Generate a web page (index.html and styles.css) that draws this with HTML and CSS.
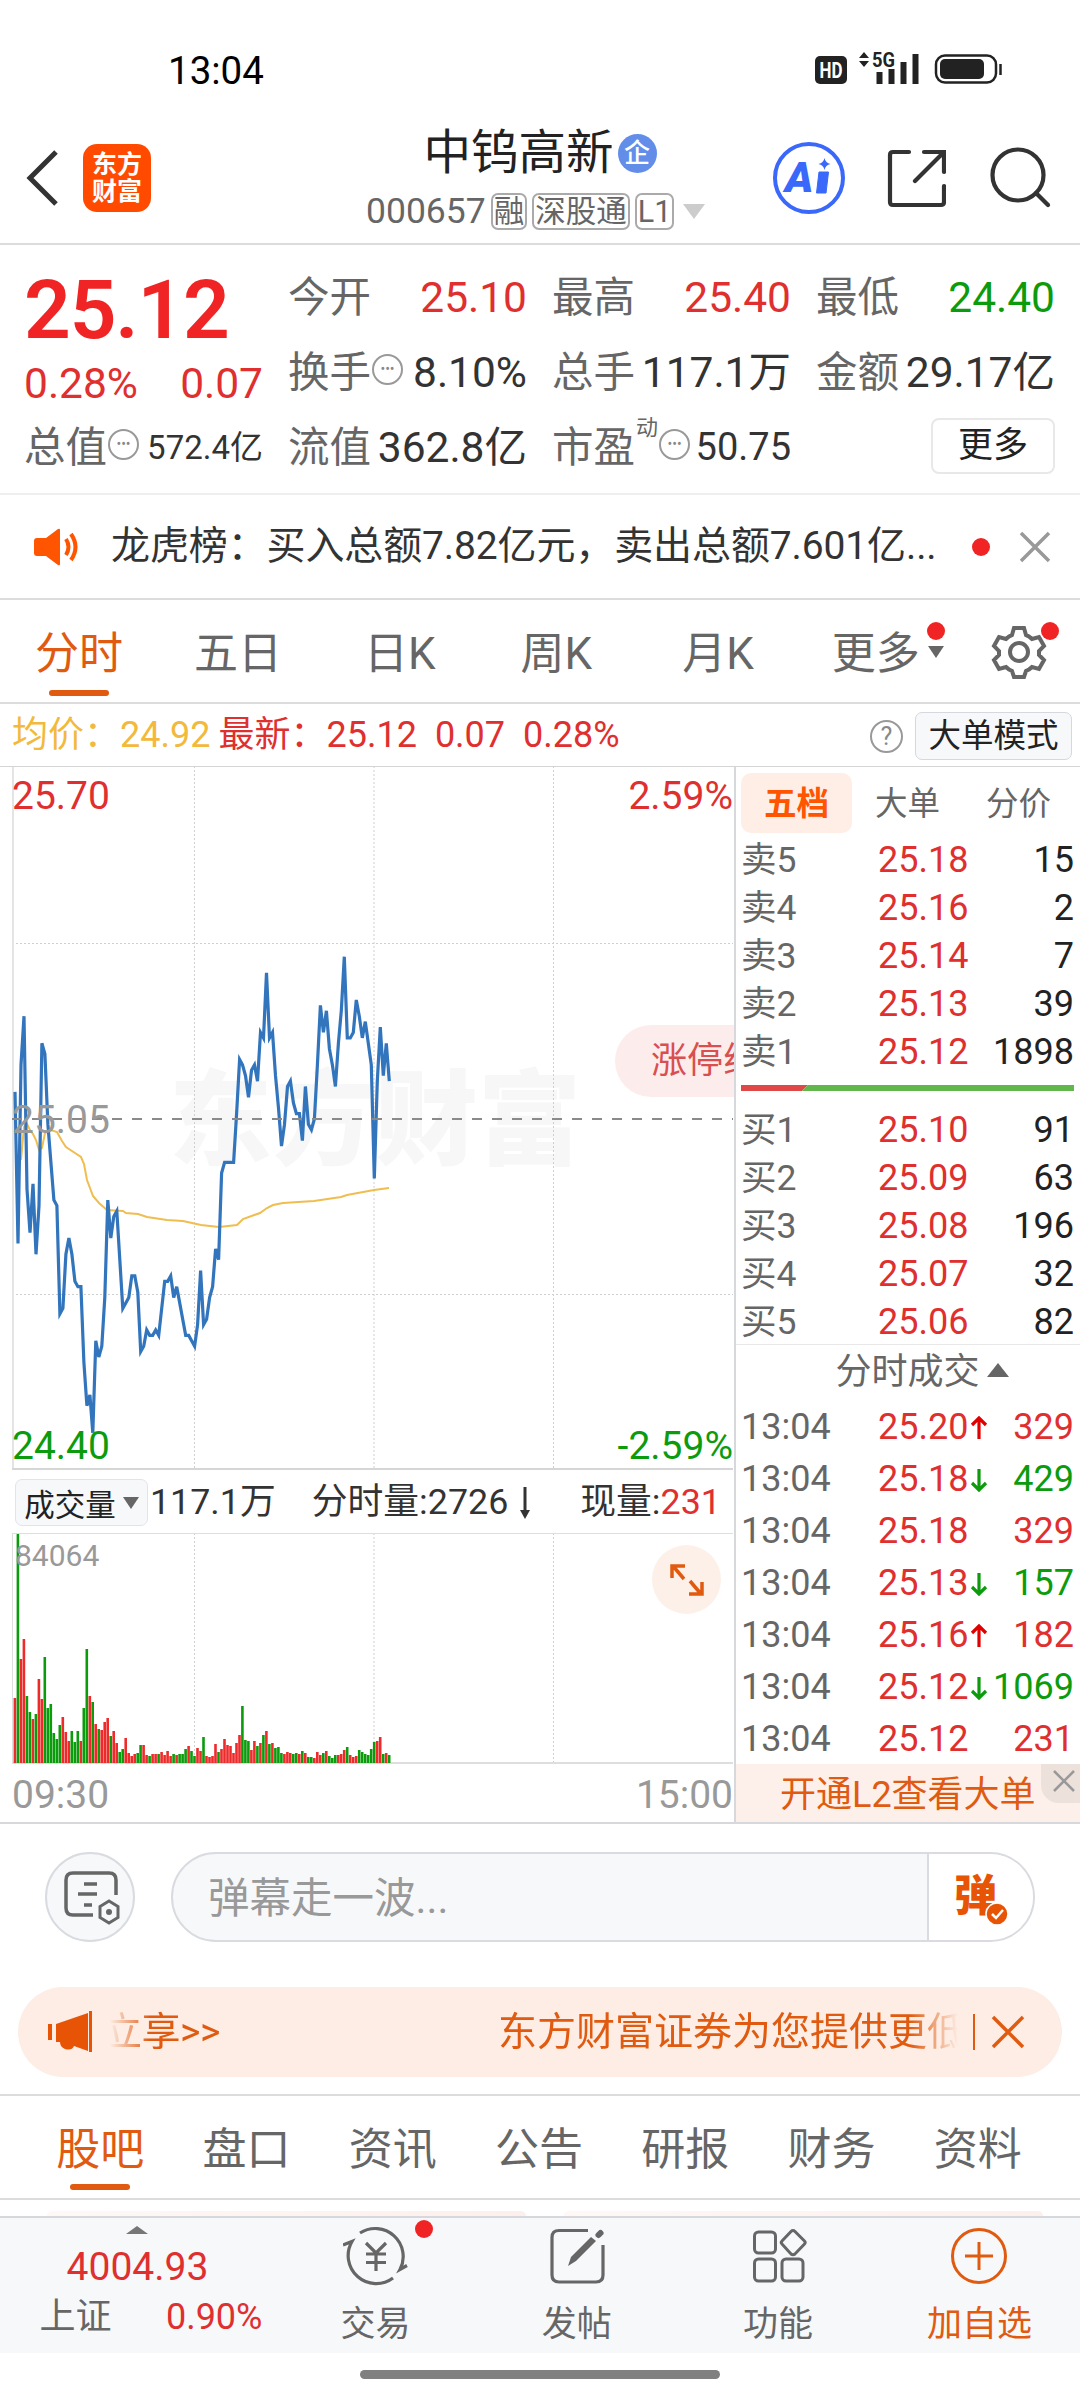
FILE: index.html
```html
<!DOCTYPE html>
<html lang="zh-CN">
<head>
  <meta charset="UTF-8">
  <meta name="viewport" content="width=device-width, initial-scale=1.0">
  <title>中钨高新 000657</title>
  <link rel="stylesheet" href="styles.css">
</head>
<body>
  <div class="status-bar">
    <span class="clock">13:04</span>
    <svg width="190" height="36" viewBox="0 0 190 36">
      <rect x="1" y="5" width="32" height="28" rx="5" fill="#222"/>
      <text x="17" y="27" class="hd" text-anchor="middle" textLength="23" lengthAdjust="spacingAndGlyphs">HD</text>
      <path d="M50 1l5 6H45zM50 16l5-6H45z" fill="#222"/>
      <text x="58" y="16" class="net" textLength="23" lengthAdjust="spacingAndGlyphs">5G</text>
      <path d="M65.500 21v12M77.500 18v15M89.500 11v22M101.500 3v30" stroke="#222" stroke-width="6"/>
      <rect x="122" y="4.500" width="60" height="27" rx="9" fill="none" stroke="#222" stroke-width="2.500"/>
      <rect x="126" y="8" width="44" height="20" rx="5" fill="#222"/>
      <path d="M186.500 13v11" stroke="#222" stroke-width="2.500"/>
    </svg>
  </div>

  <header class="header">
    <svg class="back" width="34" height="58" viewBox="0 0 34 58"><path d="M30 3L4 29l26 26" fill="none" stroke="#333" stroke-width="5"/></svg>
    <div class="logo">东方<br>财富</div>
    <div class="stock">
      <div class="stock-name">中钨高新<span class="corp">企</span></div>
      <div class="stock-code">000657<span class="tag">融</span><span class="tag">深股通</span><span class="tag">L1</span><i class="tri-down big"></i></div>
    </div>
    <svg class="ai" width="74" height="74" viewBox="0 0 74 74">
      <circle cx="37" cy="37" r="34" fill="none" stroke="#3a68fa" stroke-width="4"/>
      <text x="13" y="51" class="ai-text">A</text>
      <path d="M47 31h9.500l-2.500 21h-9.500z" fill="#3a68fa" stroke="#3a68fa" stroke-linejoin="round"/>
      <path d="M52.500 17q1 5 6 6-5 1-6 6-1-5-6-6 5-1 6-6z" fill="#3a68fa"/>
    </svg>
    <svg class="share" width="60" height="60" viewBox="0 0 60 60">
      <path d="M23 4H7q-3 0-3 3v47q0 3 3 3h48q3 0 3-3V38M38 4h20v20M57 5L29 33" fill="none" stroke="#333" stroke-width="4.200" stroke-linecap="round"/>
    </svg>
    <svg class="search" width="64" height="64" viewBox="0 0 64 64">
      <circle cx="29" cy="29" r="25.500" fill="none" stroke="#333" stroke-width="4.200"/>
      <path d="M47 47l12 12" stroke="#333" stroke-width="4.200" stroke-linecap="round"/>
    </svg>
  </header>

  <section class="quote">
    <div class="now">
      <div class="price">25.12</div>
      <div class="change"><span>0.28%</span><span>0.07</span></div>
      <div class="cell"><label>总值</label><i class="dots">•••</i><b class="small">572.4亿</b></div>
    </div>
    <div class="stats">
      <div class="cell"><label>今开</label><b class="red">25.10</b></div>
      <div class="cell"><label>最高</label><b class="red">25.40</b></div>
      <div class="cell"><label>最低</label><b class="green">24.40</b></div>
      <div class="cell"><label>换手</label><i class="dots">•••</i><b>8.10%</b></div>
      <div class="cell"><label>总手</label><b>117.1万</b></div>
      <div class="cell"><label>金额</label><b>29.17亿</b></div>
      <div class="cell"><label>流值</label><b>362.8亿</b></div>
      <div class="cell"><label>市盈</label><sup>动</sup><i class="dots">•••</i><b class="pe">50.75</b></div>
      <div class="cell"><button class="more-btn">更多</button></div>
    </div>
  </section>

  <div class="notice">
    <svg width="48" height="40" viewBox="0 0 48 40">
      <path d="M4 11h9L25 2q2-1 2 1v34q0 2-2 1L13 29H4q-3 0-3-3V14q0-3 3-3z" fill="#ff5500"/>
      <path d="M33 12q5 8 0 16M38 7q9 13 0 26" fill="none" stroke="#ff5500" stroke-width="4"/>
    </svg>
    <p>龙虎榜：买入总额7.82亿元，卖出总额7.601亿...</p>
    <i class="dot"></i>
    <svg class="close" width="32" height="32" viewBox="0 0 32 32"><path d="M2 2l28 28M30 2L2 30" stroke="#999" stroke-width="3.500"/></svg>
  </div>

  <nav class="periods">
    <a class="active">分时</a>
    <a>五日</a>
    <a>日K</a>
    <a>周K</a>
    <a>月K</a>
    <a class="more">更多<span class="more-mark"><i class="dot"></i><i class="tri-down"></i></span></a>
    <span class="gear">
      <svg width="56" height="56" viewBox="0 0 56 56" fill="none" stroke="#666" stroke-width="4">
        <path d="M23 4h10l2 7q3 1 6 4l7-2 5 9-5 5v4l5 5-5 9-7-2q-3 3-6 4l-2 6H23l-2-6q-3-1-6-4l-7 2-5-9 5-5v-4l-5-5 5-9 7 2q3-3 6-4z"/>
        <circle cx="28" cy="28" r="9"/>
      </svg>
      <i class="dot"></i>
    </span>
  </nav>

  <div class="legend">
    <span class="avg">均价：24.92</span>
    <span class="last">最新：25.12</span>
    <span class="last">0.07</span>
    <span class="last">0.28%</span>
    <i class="help">?</i>
    <button class="mode-btn">大单模式</button>
  </div>

  <main class="board">
    <div class="charts">
      <div class="trend">
        <svg width="734" height="703" viewBox="0 1 734 703">
          <text x="169" y="391" class="watermark">东方财富</text>
          <g stroke="#cfcfcf" stroke-dasharray="2 2">
            <path d="M12 177.500h721M12 528.500h721M194.500 0v703M374 0v703M553.500 0v703"/>
          </g>
          <path d="M13 0v703" stroke="#e4e4e4" stroke-width="2"/>
          <path d="M12 703h721" stroke="#d6d6d6" stroke-width="2"/>
          <polyline id="avg-line" fill="none" stroke="#f0bd4f" stroke-width="2"/>
          <polyline id="price-line" fill="none" stroke="#3275bd" stroke-width="3.200"/>
          <path d="M12 353h721" stroke="#8a8a8a" stroke-width="2" stroke-dasharray="10 10"/>
        </svg>
        <span class="axis top-left red">25.70</span>
        <span class="axis top-right red">2.59%</span>
        <span class="axis mid-left">25.05</span>
        <span class="axis bottom-left green">24.40</span>
        <span class="axis bottom-right green">-2.59%</span>
        <span class="limit">涨停线</span>
      </div>
      <div class="vol-head">
        <button class="vol-btn">成交量<i class="tri-down"></i></button>
        <span class="vol-total">117.1万</span>
        <span class="vol-min">分时量:2726</span>
        <svg width="16" height="34" viewBox="0 0 16 34"><path d="M8 1v26" stroke="#333" stroke-width="3"/><path d="M3 24h10l-5 9z" fill="#333"/></svg>
        <span class="vol-now">现量:<em>231</em></span>
      </div>
      <div class="volume">
        <svg width="734" height="231" viewBox="0 0 734 231">
          <path d="M194.500 0v229M374 0v229M553.500 0v229" stroke="#cfcfcf" stroke-dasharray="2 2"/>
          <path d="M12.500 0v230M12 .5h721" stroke="#dedede"/>
          <path d="M12 230h721" stroke="#dedede" stroke-width="2"/>
          <g id="bars"></g>
        </svg>
        <span class="vol-max">84064</span>
        <span class="expand">
          <svg width="36" height="36" viewBox="0 0 36 36" fill="none" stroke="#e05a10" stroke-width="3.500"><path d="M3 16V4h13M4 4l11 13M33 20v12H20M32 32L21 19"/></svg>
        </span>
      </div>
      <div class="times"><span>09:30</span><span>15:00</span></div>
    </div>

    <aside class="depth">
      <div class="depth-tabs"><a class="active">五档</a><a>大单</a><a>分价</a></div>
      <div class="levels" id="asks"></div>
      <svg class="ratio" width="333" height="6" viewBox="0 0 333 6"><path d="M0 0h67l-6 6H0z" fill="#e04848"/><path d="M67 0h266v6H61z" fill="#61b64c"/></svg>
      <div class="levels" id="bids"></div>
      <div class="ticks-head">分时成交<i class="tri-up"></i></div>
      <div class="ticks" id="ticks"></div>
      <div class="l2">开通L2查看大单
        <span class="l2-close"><svg width="22" height="22" viewBox="0 0 22 22"><path d="M1 1l20 20M21 1L1 21" stroke="#999" stroke-width="2.500"/></svg></span>
      </div>
    </aside>
  </main>

  <div class="danmu">
    <span class="danmu-set">
      <svg width="60" height="60" viewBox="0 0 60 60" fill="none" stroke="#666" stroke-width="3.500">
        <path d="M33 48H13q-7 0-7-7V13q0-7 7-7h36q7 0 7 7v15"/>
        <path d="M24 17h13M18 27h19M24 38h8"/>
        <path d="M49 34l9 5.500v11L49 56l-9-5.500v-11z" stroke-width="3"/>
        <circle cx="49" cy="45" r="3" fill="#666" stroke="none"/>
      </svg>
    </span>
    <div class="danmu-input">
      <span class="placeholder">弹幕走一波...</span>
      <span class="danmu-btn">弹<svg width="24" height="24" viewBox="0 0 24 24"><circle cx="12" cy="12" r="11" fill="#e85405" stroke="#fff" stroke-width="1.500"/><path d="M7 12l4 4 7-8" fill="none" stroke="#fff" stroke-width="2.500"/></svg></span>
    </div>
  </div>

  <div class="ad">
    <svg width="50" height="42" viewBox="0 0 50 42"><path d="M2 13h4v16H2zM10 13L42 2v38L28 35q-2 5-9 3-5-2-5-7h-4zM43 0h3v41h-3z" fill="#e85405"/></svg>
    <div class="ad-text"><span>立享&gt;&gt;</span><span>东方财富证券为您提供更低</span></div>
    <i class="ad-line"></i>
    <svg width="34" height="34" viewBox="0 0 34 34"><path d="M2 2l30 30M32 2L2 32" stroke="#e05a10" stroke-width="3.500"/></svg>
  </div>

  <nav class="sections">
    <a class="active">股吧</a><a>盘口</a><a>资讯</a><a>公告</a><a>研报</a><a>财务</a><a>资料</a>
  </nav>
  <div class="peek"><i></i><i></i></div>

  <footer class="bottom">
    <div class="index">
      <i class="tri-up"></i>
      <strong>4004.93</strong>
      <div><span>上证</span><em>0.90%</em></div>
    </div>
    <a class="nav-item">
      <svg width="66" height="60" viewBox="0 0 66 60" fill="none" stroke="#666" stroke-width="3.200">
        <path d="M0 19l9-3.500A28 28 0 0 0 50 52M17 7a28 28 0 0 1 40 36.500l7-4"/>
        <path d="M23 17l10 10 10-10M33 27v18M23 28h20M23 36.500h20"/>
      </svg>
      <i class="dot"></i>交易
    </a>
    <a class="nav-item">
      <svg width="60" height="60" viewBox="0 0 60 60" fill="none" stroke="#666" stroke-width="3.200">
        <path d="M41 4.500H12q-7 0-7 7V49q0 7 7 7h37q7 0 7-7V19"/>
        <path d="M21 40l3-9L44 11l5 4-20 20z" fill="#666" stroke="none"/><path d="M51.500 9l2-2" stroke-width="6" stroke-linecap="round"/>
      </svg>
      发帖
    </a>
    <a class="nav-item">
      <svg width="60" height="60" viewBox="0 0 60 60" fill="none" stroke="#666" stroke-width="3">
        <rect x="6.500" y="6" width="21" height="21" rx="4"/><rect x="6.500" y="33" width="21" height="22" rx="4"/><rect x="34" y="33" width="21" height="22" rx="4"/>
        <path d="M45 4.500q1 0 2 1l9.500 9.500q1.500 1.500 0 3L47 28q-2 1.500-4 0l-9-10q-1.500-1.500 0-3l9-9.500q1-1 2-1z"/>
      </svg>
      功能
    </a>
    <a class="nav-item add">
      <svg width="60" height="60" viewBox="0 0 60 60" fill="none" stroke="#e05a10" stroke-width="3"><circle cx="30" cy="30" r="26.500"/><path d="M30 16v28M16 30h28"/></svg>
      加自选
    </a>
  </footer>
  <div class="home-bar"></div>

  <script>
    // minute prices, in cents away from the previous close 25.05
    const prices = [
      5, -23, 10, 19, -13, -21, -12, -25, -16, 14, 12, -1, -8, -15, -16, -36, -35, -25, -22, -25,
      -30, -31, -31, -45, -53, -51, -58, -41, -44, -42, -33, -15, -22, -18, -17, -26, -35, -34, -33, -29,
      -29, -32, -43, -42, -39, -40, -40, -39, -40, -35, -30, -30, -29, -33, -31, -34, -37, -40, -40, -41,
      -42, -38, -28, -38, -37, -33, -31, -24, -26, -10, -8, -8, -8, -8, 1, 11, 10, 8, 4, 9,
      10, 7, 16, 15, 27, 15, 16, 8, 2, -5, -1, 6, 7, 3, 1, 1, -4, 6, -1, -2,
      0, 10, 21, 16, 20, 13, 10, 6, 14, 20, 30, 15, 15, 16, 22, 19, 15, 18, 14, 10,
      -11, 7, 17, 8, 14, 7
    ];
    document.getElementById('price-line').setAttribute('points',
      prices.map((c, i) => (15 + i * 2.994).toFixed(1) + ',' + (353 - c * 5.41).toFixed(1)).join(' '));

    const avg = [
      [21, 394], [24, 361], [27, 358], [30, 364], [33, 368], [36, 374], [39, 384], [42, 382], [45, 367], [51, 364],
      [57, 366], [62, 375], [66, 381], [75, 387], [81, 391], [84, 398], [87, 414], [93, 430], [99, 437], [107, 444],
      [123, 445], [126, 447], [138, 448], [147, 451], [167, 454], [183, 455], [201, 459], [219, 461], [237, 459], [243, 453],
      [260, 447], [267, 442], [273, 439], [283, 437], [314, 435], [341, 431], [347, 429], [374, 424], [389, 422]
    ];
    document.getElementById('avg-line').setAttribute('points', avg.join(' '));

    // bar heights, r = up, g = down
    const volumes = ('r65 g229 r104 r124 g67 g51 r44 g49 r84 r64 g106 g55 g59 g30 g24 g38 r46 r31 r22 g32 g21 g32 r22 g55 g114 ' +
      'r67 g61 r39 g34 r33 r41 r45 g27 r32 r20 g11 g14 r25 r10 r7 r9 g10 g18 r18 r8 g7 r9 r9 g9 r11 r8 r12 r7 g9 r8 g9 g9 g14 ' +
      'r17 g12 g7 r15 r12 g26 r7 r6 r7 r19 g11 r14 r24 r18 r17 r10 r20 r28 g57 g23 g22 r13 r22 g17 r20 g28 r32 g19 r20 g15 g16 ' +
      'g10 r9 r11 r10 g9 g10 r9 g12 r10 g6 g6 r5 r11 r8 g10 r12 g7 g5 g8 r8 r9 r13 g16 r8 r6 r7 g13 g11 g9 g8 g14 g21 r22 r26 g9 r10 g8').split(' ');
    document.getElementById('bars').innerHTML = volumes.map((v, i) => {
      const h = +v.slice(1);
      return `<rect x="${(13.6 + i * 2.994).toFixed(1)}" y="${230 - h}" width="2.600" height="${h}" fill="${v[0] === 'r' ? '#ee2b2b' : '#0c9b0c'}"/>`;
    }).join('');

    const asks = [['卖5', '25.18', 15], ['卖4', '25.16', 2], ['卖3', '25.14', 7], ['卖2', '25.13', 39], ['卖1', '25.12', 1898]];
    const bids = [['买1', '25.10', 91], ['买2', '25.09', 63], ['买3', '25.08', 196], ['买4', '25.07', 32], ['买5', '25.06', 82]];
    const level = r => `<div class="row"><span>${r[0]}</span><b>${r[1]}</b><em>${r[2]}</em></div>`;
    document.getElementById('asks').innerHTML = asks.map(level).join('');
    document.getElementById('bids').innerHTML = bids.map(level).join('');

    const ticks = [
      ['25.20', 'up', 329, 'red'], ['25.18', 'down', 429, 'green'], ['25.18', '', 329, 'red'], ['25.13', 'down', 157, 'green'],
      ['25.16', 'up', 182, 'red'], ['25.12', 'down', 1069, 'green'], ['25.12', '', 231, 'red']
    ];
    const arrows = {
      up: '<svg width="18" height="24" viewBox="0 0 18 24"><path d="M9 23V2M2 9l7-7 7 7" fill="none" stroke="#e00000" stroke-width="3.200"/></svg>',
      down: '<svg width="18" height="24" viewBox="0 0 18 24"><path d="M9 1v21M2 15l7 7 7-7" fill="none" stroke="#0c9b0c" stroke-width="3.200"/></svg>'
    };
    document.getElementById('ticks').innerHTML = ticks.map(t =>
      `<div class="row"><span>13:04</span><b>${t[0]}${arrows[t[1]] || ''}</b><em class="${t[3]}">${t[2]}</em></div>`).join('');
  </script>
</body>
</html>
```
FILE: styles.css
```css
* {
  box-sizing: border-box;
}

body {
  margin: 0;
  width: 1080px;
  height: 2400px;
  overflow: hidden;
  background: #fff;
  color: #333;
  font-family: Roboto, "Noto Sans CJK SC", sans-serif;
  font-size: 36px;
  line-height: 1.2;
}

svg {
  display: block;
  flex: none;
}

p {
  margin: 0;
}

b, em, i, strong {
  font-weight: 400;
  font-style: normal;
}

button {
  font-family: inherit;
  color: #222;
  padding: 0;
  white-space: nowrap;
}

.red { color: #df2f2f; }
.green { color: #0c9b0c; }

.dot {
  width: 18px;
  height: 18px;
  border-radius: 50%;
  background: #f02424;
}

.tri-down {
  border: 8px solid transparent;
  border-top: 12px solid #666;
  border-bottom: 0;
}

.tri-up {
  border: 11px solid transparent;
  border-bottom: 14px solid #666;
  border-top: 0;
}

/* status bar */
.status-bar {
  height: 112px;
  padding: 31px 76px 0 168px;
  display: flex;
  align-items: center;
  justify-content: space-between;
}

.clock {
  font-size: 38.500px;
  color: #000;
}

.status-bar svg {
  margin-top: -6px;
}

.hd {
  font-size: 22px;
  font-weight: 700;
  fill: #fff;
}

.net {
  font-size: 21px;
  font-weight: 700;
  fill: #222;
}

/* header */
.header {
  height: 133px;
  display: flex;
  align-items: center;
  padding: 0 26px 0;
  border-bottom: 2px solid #dcdcdc;
}

.logo {
  width: 68px;
  height: 68px;
  margin-left: 23px;
  padding-top: 7px;
  border-radius: 14px;
  background: #ff4a00;
  color: #fff;
  font-size: 25px;
  line-height: 27px;
  font-weight: 700;
  text-align: center;
}

.stock {
  width: 348px;
  margin-left: 215px;
  padding-top: 11px;
}

.stock-name {
  display: flex;
  align-items: center;
  justify-content: center;
  font-size: 47.500px;
  line-height: 56px;
  color: #222;
}

.corp {
  width: 39px;
  height: 39px;
  margin-left: 4px;
  border-radius: 50%;
  background: #628ee9;
  color: #fff;
  font-size: 26px;
  line-height: 38px;
  font-weight: 500;
  text-align: center;
}

.stock-code {
  display: flex;
  align-items: center;
  height: 60px;
  font-size: 35.500px;
  color: #666;
}

.tag {
  margin-left: 5px;
  padding: 0 1px;
  height: 37px;
  border: 2px solid #aaa;
  border-radius: 7px;
  font-size: 30.500px;
  line-height: 33px;
  white-space: nowrap;
}

.tri-down.big {
  border-width: 15px 11px 0;
  border-top-color: #ccc;
  margin-left: 9px;
}

.ai { margin-left: 58px; }
.share { margin-left: 40px; }
.search { margin-left: 43px; }

.ai-text {
  font-size: 43px;
  font-weight: 900;
  font-style: italic;
  fill: #3a68fa;
}

/* quote */
.quote {
  height: 250px;
  display: flex;
  padding: 15px 24px 0 24px;
  border-bottom: 2px solid #eee;
}

.now {
  width: 239px;
  margin-right: 25px;
}

.price {
  height: 93px;
  font-size: 82px;
  line-height: 100px;
  font-weight: 600;
  letter-spacing: -1.200px;
  color: #f02424;
}

.change {
  height: 57px;
  line-height: 62px;
  display: flex;
  justify-content: space-between;
  font-size: 42.500px;
  color: #df2f2f;
}

.stats {
  display: grid;
  grid-template-columns: repeat(3, 239px);
  column-gap: 25px;
  height: 225px;
  grid-template-rows: repeat(3, 75px);
}

.cell {
  height: 75px;
  display: flex;
  align-items: center;
  white-space: nowrap;
}

.cell label {
  font-size: 41.500px;
  color: #666;
}

.cell b {
  margin-left: auto;
  font-size: 42.500px;
}

.cell b.small { font-size: 33px; }
.cell b.pe { font-size: 38px; }

.cell sup {
  font-size: 22px;
  line-height: 36px;
  color: #666;
  align-self: flex-start;
  margin-left: 1px;
}

.dots {
  width: 31px;
  height: 31px;
  margin: -6px 0 0 1px;
  border: 2.500px solid #999;
  border-radius: 50%;
  color: #888;
  font-size: 14px;
  line-height: 26px;
  text-align: center;
}

.more-btn {
  width: 124px;
  height: 56px;
  margin-left: auto;
  margin-top: -4px;
  border: 2px solid #e8e8e8;
  border-radius: 8px;
  background: #fff;
  font-size: 35px;
  line-height: 50px;
}

/* notice */
.notice {
  height: 105px;
  display: flex;
  align-items: center;
  padding: 0 29px 0 33px;
  border-bottom: 2px solid #dcdcdc;
}

.notice p {
  margin-left: 30px;
  width: 861px;
  font-size: 39px;
  letter-spacing: -0.120px;
  white-space: nowrap;
}

.notice .close {
  margin-left: auto;
}

/* period tabs */
.periods {
  height: 104px;
  display: flex;
  align-items: center;
  padding: 6px 19px 0 35px;
  border-bottom: 2px solid #dcdcdc;
  font-size: 44px;
  color: #666;
}

.periods a { position: relative; margin-right: 71px; }
.periods a:nth-child(2) { margin-right: 82px; }
.periods a:nth-child(3) { margin-right: 85px; }
.periods a:nth-child(4) { margin-right: 90px; }
.periods a:nth-child(5) { margin-right: 78px; }

.periods a.active,
.sections a.active {
  color: #e05a10;
}

.periods a.active::after,
.sections a.active::after {
  content: "";
  position: absolute;
  left: 50%;
  bottom: -16px;
  width: 60px;
  height: 6px;
  margin-left: -30px;
  border-radius: 3px;
  background: #e05a10;
}

.periods a.more {
  display: flex;
  margin-right: 0;
}

.more-mark {
  display: flex;
  flex-direction: column;
  align-items: center;
  gap: 6px;
  margin: -6px 0 0 7px;
}

.gear {
  position: relative;
  margin: -4px 14px 0 auto;
}

.gear .dot {
  position: absolute;
  right: -12px;
  top: -2px;
}

/* legend */
.legend {
  height: 63px;
  display: flex;
  align-items: center;
  padding: 2px 8px 0 12px;
  border-bottom: 1px solid #d4d4d4;
  white-space: nowrap;
}

.avg { color: #f2b93c; margin-right: 8px; }
.last { color: #df2f2f; margin-right: 18px; }

.help {
  width: 33px;
  height: 33px;
  margin-left: auto;
  border: 2.500px solid #999;
  border-radius: 50%;
  color: #888;
  font-size: 25px;
  line-height: 29px;
  text-align: center;
}

.mode-btn {
  width: 157px;
  height: 48px;
  margin-left: 12px;
  border: 1px solid #d5d8de;
  border-radius: 7px;
  background: #f7f8fa;
  font-size: 32.500px;
  line-height: 46px;
}

/* charts */
.board {
  display: grid;
  grid-template-columns: 734px 346px;
  height: 1057px;
  border-bottom: 2px solid #d6d8dc;
}

.trend {
  position: relative;
  height: 703px;
  overflow: hidden;
}

.watermark {
  font-size: 103px;
  font-weight: 900;
  fill: #f7f7f7;
}

.axis {
  position: absolute;
  font-size: 39px;
  line-height: 44px;
}

.top-left { left: 12px; top: 7px; }
.top-right { right: 1px; top: 7px; }
.mid-left { left: 12px; top: 331px; color: #999; }
.bottom-left { left: 12px; bottom: 2px; }
.bottom-right { right: 1px; bottom: 2px; }

.limit {
  position: absolute;
  left: 615px;
  top: 258px;
  height: 72px;
  padding-left: 36px;
  border-radius: 36px 0 0 36px;
  background: #fdecec;
  color: #d94f4f;
  font-size: 36px;
  line-height: 72px;
  white-space: nowrap;
}

.vol-head {
  height: 63px;
  display: flex;
  align-items: center;
  padding: 2px 0 0 15px;
  font-size: 35.800px;
  white-space: nowrap;
}

.vol-btn {
  width: 133px;
  height: 47px;
  display: flex;
  align-items: center;
  justify-content: center;
  gap: 7px;
  border: 1px solid #e2e4ea;
  border-radius: 7px;
  background: #f7f8fa;
  font-size: 30.500px;
}

.vol-total { margin-left: 2px; }
.vol-min { margin-left: 36px; margin-right: 9px; }
.vol-now { margin-left: 47px; }
.vol-now em { color: #df2f2f; }

.volume {
  position: relative;
  height: 231px;
}

.vol-max {
  position: absolute;
  left: 15px;
  top: 5px;
  font-size: 30px;
  color: #999;
}

.expand {
  position: absolute;
  left: 652px;
  top: 12px;
  width: 69px;
  height: 69px;
  border-radius: 50%;
  background: #fdf0e8;
  display: flex;
  align-items: center;
  justify-content: center;
}

.times {
  display: flex;
  justify-content: space-between;
  padding: 0 1px 0 12px;
  height: 58px;
  line-height: 62px;
  font-size: 39px;
  color: #999;
}

/* order book */
.depth {
  border-left: 2px solid #d6d8dc;
}

.depth-tabs {
  height: 69px;
  display: flex;
  align-items: center;
  padding: 3px 0 0 5px;
  font-size: 32.500px;
  color: #666;
}

.depth-tabs a {
  width: 111px;
  height: 60px;
  line-height: 62px;
  text-align: center;
}

.depth-tabs a.active {
  border-radius: 10px;
  background: #feeee6;
  color: #ff5500;
  font-weight: 700;
}

.row {
  height: 48px;
  display: grid;
  grid-template-columns: 136px 110px 1fr;
  align-items: center;
  padding: 1px 6px 0 5px;
}

.row span { color: #666; }
.row b { color: #df2f2f; display: flex; align-items: center; gap: 2px; padding-left: 1px; }
.row em { color: #222; text-align: right; }
.row em.red { color: #df2f2f; }
.row em.green { color: #0c9b0c; }
.levels span { font-size: 35.500px; }

.ratio {
  margin: 9px 0 15px 5px;
}

.ticks-head {
  height: 57px;
  margin-top: -2px;
  display: flex;
  align-items: center;
  justify-content: center;
  gap: 7px;
  padding-left: 28px;
  border-top: 1px solid #e8e8e8;
  color: #666;
}

.ticks-head .tri-up {
  margin-top: -6px;
}

.ticks .row {
  height: 52px;
}

.ticks .row em {
  margin-left: -20px;
}

.l2 {
  position: relative;
  height: 58px;
  margin-top: -1px;
  padding-left: 44px;
  background: #fdf0ea;
  color: #e05a10;
  line-height: 62px;
}

.l2-close {
  position: absolute;
  right: 0;
  top: 0;
  width: 39px;
  height: 39px;
  padding: 6px 0 0 12px;
  border-radius: 0 0 0 18px;
  background: #ede1dc;
}

/* danmu */
.danmu {
  height: 163px;
  display: flex;
  padding: 28px 45px 0;
  gap: 36px;
}

.danmu-set {
  width: 90px;
  height: 90px;
  border: 2px solid #d9dbe0;
  border-radius: 50%;
  background: #f7f8fa;
  padding: 13px;
}

.danmu-input {
  width: 864px;
  height: 90px;
  display: flex;
  border: 2px solid #d9dbe0;
  border-radius: 45px;
  background: #f7f8fa;
  overflow: hidden;
}

.placeholder {
  width: 754px;
  padding-left: 35px;
  font-size: 41.500px;
  line-height: 90px;
  color: #999;
}

.danmu-btn {
  position: relative;
  flex: 1;
  padding-left: 25px;
  border-left: 2px solid #d9dbe0;
  background: #fff;
  color: #e85405;
  font-size: 43px;
  line-height: 85px;
  font-weight: 900;
}

.danmu-btn svg {
  position: absolute;
  left: 56px;
  top: 48px;
}

.ad {
  height: 90px;
  margin: 0 18px 17px;
  display: flex;
  align-items: center;
  padding: 0 37px 0 28px;
  border-radius: 45px;
  background: #fdede4;
  color: #e05a10;
}

.ad-text {
  width: 864px;
  height: 60px;
  margin-left: 14px;
  display: flex;
  font-size: 39px;
  line-height: 60px;
  overflow: hidden;
  white-space: nowrap;
  -webkit-mask-image: linear-gradient(90deg, transparent, #000 40px, #000 800px, transparent 848px);
  mask-image: linear-gradient(90deg, transparent, #000 40px, #000 800px, transparent 848px);
}

.ad-text span:first-child {
  width: 395px;
  margin-left: -7px;
  flex: none;
  letter-spacing: -0.500px;
}

.ad-line {
  width: 2px;
  height: 36px;
  background: #e05a10;
  margin-right: 16px;
}

/* section tabs */
.sections {
  height: 106px;
  display: flex;
  padding: 0 29px 0 27px;
  border-top: 2px solid #dcdcdc;
  border-bottom: 2px solid #dcdcdc;
  font-size: 44px;
  color: #666;
}

.sections a {
  position: relative;
  flex: 1;
  line-height: 108px;
  text-align: center;
}

.sections a.active::after {
  bottom: 8px;
}

.peek {
  height: 16px;
  display: flex;
  justify-content: space-between;
  padding: 11px 37px 0 47px;
}

.peek i {
  width: 479px;
  height: 5px;
  border-radius: 14px 14px 0 0;
  background: linear-gradient(90deg, #fff8f5, #fdf0ec);
}

/* bottom nav */
.bottom {
  height: 137px;
  display: flex;
  border-top: 2px solid #d6d8de;
  background: #f7f8fa;
}

.index {
  width: 275px;
  padding-top: 8px;
  display: flex;
  flex-direction: column;
  align-items: center;
}

.index .tri-up {
  border-bottom-width: 8px;
  border-bottom-color: #777;
}

.index strong {
  margin-top: 11px;
  line-height: 44px;
  font-size: 39px;
  color: #df2f2f;
}

.index div {
  width: 223px;
  margin: 7px 0 0 27px;
  display: flex;
  justify-content: space-between;
  color: #666;
}

.index em { color: #df2f2f; }

.nav-item {
  position: relative;
  width: 201.300px;
  padding-top: 8px;
  display: flex;
  flex-direction: column;
  align-items: center;
  font-size: 35px;
  line-height: 77px;
  color: #666;
}

.nav-item.add { color: #e05a10; }

.nav-item .dot {
  position: absolute;
  left: 140px;
  top: 2px;
}

.home-bar {
  width: 360px;
  height: 9px;
  margin: 17px auto 0;
  border-radius: 5px;
  background: #808080;
}
```
